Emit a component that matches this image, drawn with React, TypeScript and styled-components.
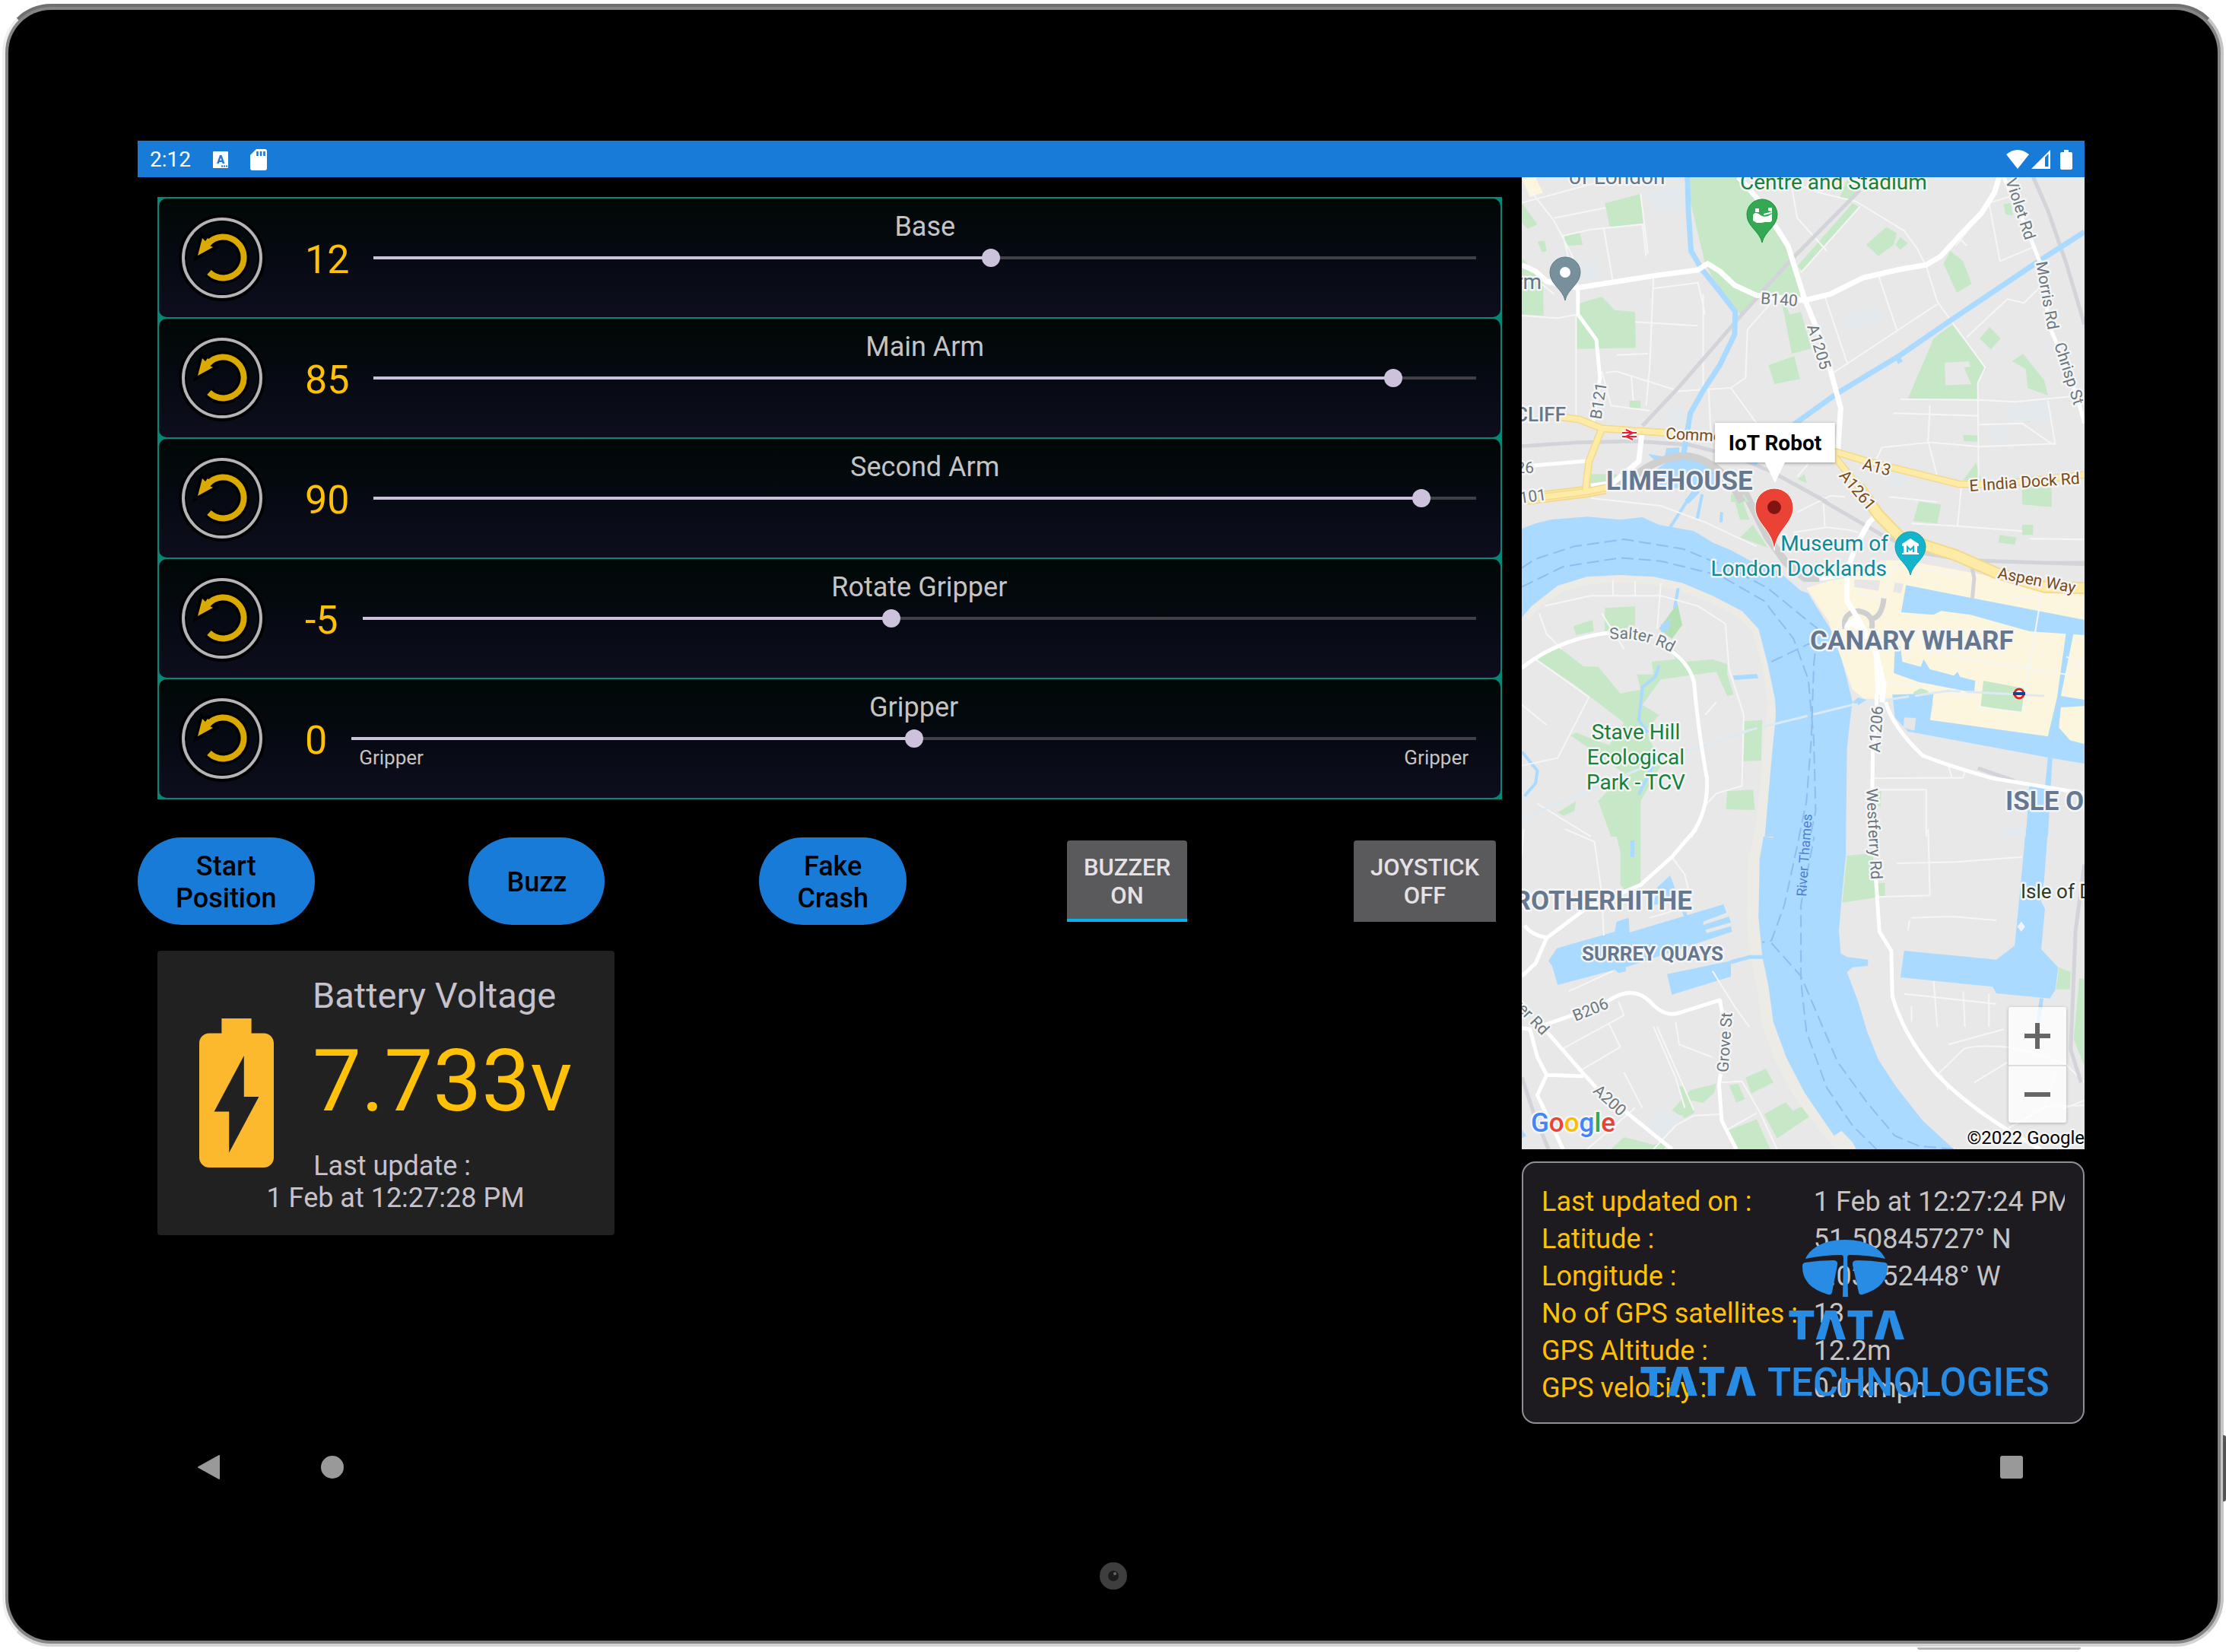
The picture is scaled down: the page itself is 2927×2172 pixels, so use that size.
import React, { useId, useState } from "react";
import styled, { createGlobalStyle } from "styled-components";

const GlobalStyle = createGlobalStyle`
  *, *::before, *::after { box-sizing: border-box; }
  body {
    margin: 0;
    background: #ffffff;
    font-family: Roboto, "Liberation Sans", sans-serif;
    color: #c6c1ca;
  }
  button, input { font: inherit; }
  button { cursor: pointer; }
`;

/* ---------- tablet shell ---------- */

const Page = styled.div`
  padding: 5px 3px 7px;
`;

const Shell = styled.div`
  position: relative;
  border: 4px solid;
  border-color: #6f706f #c6c6c6 #d4d4d4 #efefef;
  border-radius: 64px;
  background: #858585;
  padding: 4px;
`;

const PowerKey = styled.span`
  position: absolute;
  right: -7px;
  top: 1878px;
  width: 4px;
  height: 87px;
  border-radius: 0 3px 3px 0;
  background: #555555;
`;

const BottomKey = styled.span`
  position: absolute;
  right: 184px;
  bottom: -8px;
  width: 215px;
  height: 3px;
  border-radius: 0 0 4px 4px;
  background: #b4b4b4;
`;

const Glass = styled.div`
  border-radius: 56px;
  background: #000000;
`;

const Screen = styled.div`
  padding: 172px 175px 0 170px;
`;

const Chin = styled.div`
  display: flex;
  height: 171px;
  align-items: center;
  justify-content: center;
`;

/* ---------- status and navigation bars ---------- */

const StatusBar = styled.header`
  display: flex;
  align-items: center;
  justify-content: space-between;
  height: 48px;
  padding: 1px 16px 0;
  background: #187bd7;
  color: #ffffff;
`;

const StatusGroup = styled.div<{ $gap: number }>`
  display: flex;
  align-items: center;
  gap: ${(p) => p.$gap}px;
`;

const Clock = styled.time`
  font-size: 28px;
  line-height: 34px;
`;

const NavBar = styled.nav`
  display: flex;
  align-items: center;
  height: 114px;
  padding: 0 81px 0 79px;
`;

const NavButton = styled.button<{ $push?: boolean }>`
  display: flex;
  padding: 0;
  border: 0;
  background: none;
  margin-left: ${(p) => (p.$push ? "auto" : "0")};
  margin-right: ${(p) => (p.$push ? "0" : "132px")};
`;

/* ---------- page columns ---------- */

const Columns = styled.main`
  display: grid;
  grid-template-columns: minmax(0, 91fr) minmax(0, 37fr);
`;

const Controls = styled.div`
  padding: 26px 26px 0 0;
`;

const Side = styled.aside`
  display: flex;
  flex-direction: column;
  gap: 16px;
`;

/* ---------- joint sliders ---------- */

const JointList = styled.section`
  display: flex;
  flex-direction: column;
  gap: 2px;
  margin-left: 26px;
  padding: 2px;
  background: #068877;
`;

const JointRow = styled.div`
  display: flex;
  height: 156px;
  padding: 0 20px 0 26px;
  border-radius: 10px;
  background: linear-gradient(180deg, #000806 0%, #060a12 50%, #0e0e1e 100%);
`;

const ResetButton = styled.button`
  display: flex;
  align-self: center;
  padding: 0;
  border: 0;
  border-radius: 50%;
  background: none;
`;

const JointValue = styled.output`
  align-self: center;
  margin-left: 52px;
  padding-top: 5px;
  font-size: 52px;
  line-height: 60px;
  color: #ffc107;
`;

const JointTrack = styled.div`
  flex: 1;
  min-width: 0;
  margin-left: 20px;
  padding-top: 16px;
`;

const JointName = styled.label`
  display: block;
  font-size: 36px;
  line-height: 42px;
  text-align: center;
  color: #c4c4c4;
`;

const Range = styled.input`
  display: block;
  appearance: none;
  width: 100%;
  height: 20px;
  margin: 10px 0 0;
  background: none;

  &::-webkit-slider-runnable-track {
    height: 4px;
    background: linear-gradient(
      90deg,
      transparent 12px,
      #cdc2dc 12px,
      #cdc2dc var(--fill),
      #424047 var(--fill),
      #424047 calc(100% - 12px),
      transparent calc(100% - 12px)
    );
  }

  &::-webkit-slider-thumb {
    appearance: none;
    width: 24px;
    height: 24px;
    margin-top: -10px;
    border-radius: 50%;
    background: #cdc2dc;
  }
`;

const RangeEnds = styled.div`
  display: flex;
  justify-content: space-between;
  padding: 0 22px;
  font-size: 26px;
  line-height: 30px;
  color: #c4c4c4;
`;

/* ---------- command buttons ---------- */

const Commands = styled.section`
  display: flex;
  align-items: center;
  justify-content: space-between;
  margin-top: 50px;
`;

const Command = styled.button`
  min-height: 115px;
  padding: 17px 50px 14px;
  border: 0;
  border-radius: 58px;
  background: #187bd7;
  color: #000000;
  font-size: 36px;
  font-weight: 500;
  line-height: 42px;
  white-space: pre-line;
`;

const Toggle = styled.button`
  height: 107px;
  margin: 0 8px;
  padding: 0 22px;
  border: 0;
  border-radius: 4px 4px 0 0;
  background: #5a5a5c;
  color: #e6e1e5;
  font-size: 31px;
  font-weight: 500;
  line-height: 37px;
  white-space: pre-line;

  &[aria-pressed="true"] {
    box-shadow: inset 0 -4px 0 #03b4f0;
  }
`;

/* ---------- battery card ---------- */

const BatteryCard = styled.section`
  display: grid;
  grid-template-columns: 98px 1fr;
  column-gap: 51px;
  width: max-content;
  min-width: 601px;
  margin: 34px 0 0 26px;
  padding: 31px 54px 28px 55px;
  border-radius: 4px;
  background: #212121;
`;

const BatteryIcon = styled.svg`
  grid-area: 1 / 1 / 4 / 2;
  margin-top: 58px;
`;

const BatteryTitle = styled.h2`
  grid-area: 1 / 2;
  margin: 0;
  font-size: 47px;
  font-weight: 400;
  line-height: 56px;
`;

const BatteryVolts = styled.p`
  grid-area: 2 / 2;
  margin: 18px 0 0;
  font-size: 114px;
  line-height: 132px;
  color: #ffc107;
`;

const BatteryTime = styled.p`
  grid-area: 3 / 1 / 4 / 3;
  margin: 25px 0 0;
  padding-left: 24px;
  font-size: 36px;
  line-height: 42px;
  text-align: center;
  white-space: pre-line;
`;

/* ---------- map ---------- */

const MapFrame = styled.section`
  position: relative;
  overflow: hidden;
  aspect-ratio: 740 / 1278;
  background: #e8e8e8;
`;

const MapArt = styled.svg`
  display: block;
  width: 100%;
  height: 100%;

  .water { fill: #aadaff; }
  .park { fill: #c6e8c7; }
  .paved { fill: #fdf6de; }
  .campus { fill: #e3e9ed; }
  .tile path { vector-effect: non-scaling-stroke; stroke-linejoin: round; }
  .lines path { fill: none; }
  .minor { stroke: #f6f6f6; stroke-width: 2; }
  .road { stroke: #ffffff; stroke-width: 5; }
  .wide { stroke: #ffffff; stroke-width: 7; }
  .trunkEdge { stroke: #f3d98d; stroke-width: 10; }
  .trunk { stroke: #fdeba6; stroke-width: 7; }
  .rail { stroke: #d3d4d9; stroke-width: 5; }
  .tunnel { stroke: #cfcfcf; stroke-width: 10; }
  .canal { stroke: #aadaff; stroke-width: 7; }
  .bank { stroke: #ecebe6; stroke-width: 24; }
  .ferry { stroke: #8fbdf0; stroke-width: 2; stroke-dasharray: 16 7; }
  .tube { stroke: #dde9f3; stroke-width: 3; stroke-dasharray: 60 8; }

  text {
    paint-order: stroke;
    stroke: #f4f5f6;
    stroke-width: 5px;
    stroke-linejoin: round;
  }
  .street { font-size: 21px; fill: #6c777e; }
  .highway { font-size: 21px; fill: #7b4a12; }
  .district { font-size: 35px; font-weight: 700; fill: #66788f; }
  .quarter { font-size: 26px; font-weight: 700; fill: #66788f; }
  .green { font-size: 28px; fill: #188038; }
  .teal { font-size: 28px; fill: #0d8a96; }
  .plain { font-size: 28px; fill: #607787; }
  .river { font-size: 18px; fill: #4f7fd0; stroke: none; }
`;

const InfoWindow = styled.div`
  position: absolute;
  left: 45%;
  top: 323px;
  transform: translateX(-50%);
  padding: 10px 18px 8px;
  background: #ffffff;
  box-shadow: 0 1px 4px rgba(0, 0, 0, 0.35);
  color: #000000;
  font-size: 28px;
  font-weight: 700;
  line-height: 34px;
  white-space: nowrap;

  &::after {
    content: "";
    position: absolute;
    left: 50%;
    top: 100%;
    margin-left: -13px;
    border: 13px solid transparent;
    border-top: 27px solid #ffffff;
    border-bottom: 0;
  }
`;

const ZoomBox = styled.div`
  position: absolute;
  right: 24px;
  bottom: 35px;
  display: flex;
  flex-direction: column;
  width: 76px;
  border-radius: 3px;
  background: rgba(255, 255, 255, 0.76);
  box-shadow: 0 1px 4px rgba(0, 0, 0, 0.25);
`;

const ZoomButton = styled.button`
  display: flex;
  align-items: center;
  justify-content: center;
  height: 76px;
  padding: 0;
  border: 0;
  background: none;

  & + & { border-top: 2px solid #dddddd; }
`;

/* ---------- GPS panel ---------- */

const GpsPanel = styled.section`
  position: relative;
  padding: 27px 24px 20px;
  border: 2px solid #8f8e96;
  border-radius: 18px;
  background: #1d1b20;
`;

const GpsTable = styled.table`
  width: 100%;
  border-collapse: collapse;
  table-layout: fixed;
  font-size: 36px;
  line-height: 49px;

  th, td { padding: 0; text-align: left; font-weight: 400; white-space: nowrap; }
  th { width: 52%; color: #ffc107; }
  td { overflow: hidden; color: #c4c4c4; }
`;

const Brand = styled.svg`
  position: absolute;
  right: 38px;
  top: 101px;
  overflow: visible;

  text { fill: #288ce4; }
  .mark { font-family: Inter, "Noto Sans", sans-serif; font-size: 52px; font-weight: 900; }
  .name { font-family: Roboto, "Noto Sans", sans-serif; font-size: 51px; font-weight: 500; }
`;

/* ---------- data ---------- */

type Joint = { name: string; start: number; ends?: [string, string] };

const JOINTS: Joint[] = [
  { name: "Base", start: 12 },
  { name: "Main Arm", start: 85 },
  { name: "Second Arm", start: 90 },
  { name: "Rotate Gripper", start: -5 },
  { name: "Gripper", start: 0, ends: ["Gripper", "Gripper"] },
];

const GPS_ROWS: [string, string][] = [
  ["Last updated on :", "1 Feb at 12:27:24 PM"],
  ["Latitude :", "51.50845727° N"],
  ["Longitude :", "0.03352448° W"],
  ["No of GPS satellites :", "13"],
  ["GPS Altitude :", "12.2m"],
  ["GPS velocity :", "0.0 kmph"],
];

/* ---------- parts ---------- */

function ResetIcon() {
  const arc = "M38 39 A27 27 0 1 1 40 76";
  const head = "M31 31 L25 54 L45 43 L41 41 L45 37 L38 31 L35 35 Z";
  return (
    <svg width="114" height="114" viewBox="0 0 114 114" aria-hidden="true">
      <circle cx="57" cy="57" r="52" fill="none" stroke="#000000" strokeWidth="10" />
      <circle cx="57" cy="57" r="51" fill="none" stroke="#b4b3b8" strokeWidth="4" />
      <g fill="none" stroke="#000000">
        <path d={arc} strokeWidth="15" />
        <path d={head} strokeWidth="8" />
      </g>
      <path d={arc} fill="none" stroke="#daaa00" strokeWidth="8" />
      <path d={head} fill="#daaa00" />
    </svg>
  );
}

function JointControl({ joint }: { joint: Joint }) {
  const [value, setValue] = useState(joint.start);
  const id = useId();
  const share = (value + 100) / 200;
  const fill = { "--fill": `calc(12px + (100% - 24px) * ${share})` } as React.CSSProperties;
  return (
    <JointRow>
      <ResetButton type="button" aria-label={`Reset ${joint.name}`} onClick={() => setValue(0)}>
        <ResetIcon />
      </ResetButton>
      <JointValue htmlFor={id}>{value}</JointValue>
      <JointTrack>
        <JointName htmlFor={id}>{joint.name}</JointName>
        <Range
          id={id}
          type="range"
          min={-100}
          max={100}
          value={value}
          style={fill}
          onChange={(e) => setValue(Number(e.target.value))}
        />
        {joint.ends && (
          <RangeEnds>
            <span>{joint.ends[0]}</span>
            <span>{joint.ends[1]}</span>
          </RangeEnds>
        )}
      </JointTrack>
    </JointRow>
  );
}

function Pin({ x, y, fill, edge, children }: { x: number; y: number; fill: string; edge: string; children: React.ReactNode }) {
  return (
    <g transform={`translate(${x} ${y})`}>
      <path d="M0 37 C-3 22 -20 16 -20 0 A20 20 0 0 1 20 0 C20 16 3 22 0 37Z" fill={fill} stroke={edge} strokeWidth="1" />
      {children}
    </g>
  );
}

/* The district north of the river, from Mile End to the A13. */
function NorthTile() {
  return (
    <g className="tile" transform="translate(-11 -53) scale(0.4847 0.3333)">
      <path className="park" d="M478 158H605L655 240L700 350L745 430L785 620L735 650L750 700L780 690L808 835L755 855L735 700L725 640L680 620L620 705L560 610L520 500L478 240Z" />
      <path className="park" d="M692 900L762 865L777 955L708 975ZM248 262L345 225L355 340L262 357ZM23 260L65 345L38 362L23 340ZM133 390L180 378L188 425L145 430ZM170 660L240 630L275 683L330 690L332 832L170 836ZM23 480L80 560L82 705L23 700ZM905 170L940 210L905 250L885 240ZM920 262L937 275L785 530L770 510ZM65 412L85 410L90 450L78 455Z" />
      <path className="park" d="M957 425L1012 355L1040 380L1032 425L990 470ZM1050 395L1070 420L1050 445L1036 425ZM1185 450L1220 490L1243 580L1203 615L1167 500ZM1265 795L1292 750L1322 795L1295 838ZM1353 885L1382 855L1410 905L1440 960L1450 1020L1395 990L1390 915ZM1330 265L1350 260L1355 310L1335 305ZM1370 1095L1400 1085L1402 1125L1370 1125ZM1220 1175L1260 1178L1260 1203L1222 1200ZM1220 1355L1255 1285L1270 1355ZM205 1330L280 1330L290 1370L200 1385ZM315 1040H345V1070H315ZM1380 1385L1450 1375L1458 1440H1380ZM590 1410H625L640 1440H590ZM770 1350L790 1330L795 1365Z" />
      <path className="park" fillRule="evenodd" d="M1070 1033L1140 795L1190 740L1283 915L1260 965L1258 1035ZM1170 890L1235 885L1240 905L1222 910L1242 975L1172 980Z" />
      <path className="campus" d="M350 215L445 195L465 280L400 290ZM895 700L995 670L1005 730L900 770ZM1340 1060L1445 1040L1455 1115L1340 1130ZM1300 1140L1335 1135V1215L1300 1218ZM1020 1330L1060 1325L1055 1385L1020 1380ZM420 1070H460V1140H420ZM190 490H230L225 570H195Z" />
      <path className="paved" d="M23 165L60 160L80 220L45 237Z" />
      <path className="water" d="M380 1320L420 1280L470 1268L540 1285L575 1340L560 1380L400 1388ZM365 1250L410 1262L415 1228L450 1225V1252L380 1272Z" />
      <g className="lines">
        <path className="minor" d="M40 200L110 330L160 470L175 595M23 260L240 175L380 160M110 320L250 280M150 480L135 390L210 365L350 345L360 470M345 225L365 460M245 360L270 570M23 705L120 715L175 700M170 700V1100M60 560L110 620M380 550L370 900L360 1060M250 930L280 925L450 1003L590 990L630 950L635 760L720 620M515 620V990M500 570L520 700M280 860L365 855M240 925L265 1060L370 1080M320 940L325 1040M590 990L660 1130M530 1000L535 1160M380 598L500 575M330 730L500 745" />
        <path className="minor" d="M720 160L830 220L930 255L1060 370L1095 440L1120 510L1150 650L1185 720L1280 910L1260 970L1262 1370M1150 660L1040 765L905 895L862 935M845 630L905 890M990 545L1040 760M940 275L780 535M1200 430L1290 260L1360 230M1210 400L1230 430M1290 260L1320 490L1410 435M1230 790L1340 640L1385 655L1430 590M1050 1035L1260 1037L1360 1045L1540 1020M1030 1090L1260 1100M1265 1135L1380 1130L1465 1215M1000 1225L1130 1205L1265 1222L1470 1210M1130 1060L1125 1200L1150 1340M1450 1040L1470 1215M985 1270L1000 1225M770 1340L800 1290M750 160L770 320L850 450" />
        <path className="rail" d="M940 210L750 490L620 700L450 985L350 1140M1410 158L1450 290L1500 500L1549 740M23 1220L180 1205L330 1200L480 1215L600 1260L700 1320L850 1440" />
        <path className="tunnel" d="M210 1385L320 1350Q380 1270 460 1258Q560 1265 620 1440" />
        <path className="canal" d="M472 158L475 300L482 450L510 520L560 610L602 690L600 780L560 900L515 1000L480 1090L462 1250M1549 375L1420 495L1185 725L1045 865L880 1010L765 1130L650 1290M1040 865L1050 890M500 1395L470 1440" />
        <path className="wide" d="M23 505L60 530L90 570L175 595L380 548L500 525L527 500L560 530L600 585L660 625L790 645L860 620L950 555L1050 522L1120 505L1160 470L1210 390L1270 300L1305 220L1318 158" />
        <path className="wide" d="M610 158L660 240L710 350L745 430L790 640L830 780L860 920L888 1070L880 1240M350 1150L340 1280L270 1365L210 1378" />
        <path className="road" d="M175 595V700L225 800L235 950L215 1130M1330 158L1400 390L1430 500L1455 750L1490 870L1530 1030L1549 1130M50 1297L200 1278" />
        <path className="trunkEdge" d="M130 1105L180 1115L240 1150L420 1168L700 1190L880 1245L960 1280L1210 1370L1300 1372L1549 1333M865 1250L970 1440M240 1150L205 1280L195 1400M23 1430L195 1400L270 1378" />
        <path className="trunk" d="M130 1105L180 1115L240 1150L420 1168L700 1190L880 1245L960 1280L1210 1370L1300 1372L1549 1333M865 1250L970 1440M240 1150L205 1280L195 1400M23 1430L195 1400L270 1378" />
      </g>
    </g>
  );
}

/* The bend of the Thames, Canary Wharf and its docks. */
function CentreTile() {
  return (
    <g className="tile" transform="translate(-11 407) scale(0.4847 0.3333)">
      <path className="park" d="M248 478L330 472V548L248 575ZM163 550L215 525L218 570L170 585ZM60 680L125 635L190 708L230 710L290 815L345 800L335 740L380 740L375 690L440 680L420 620L470 690L540 680L580 700L580 740L597 820L580 825L550 730L400 760L350 860L395 900L360 960L400 1100L345 1240V1380H265L230 1240L300 1130L155 980L170 970L260 1020L300 930L160 775ZM625 925L675 920L672 1080L623 1082ZM580 1200L650 1195L655 1275L577 1272ZM120 1285L170 1240L165 1280L135 1298ZM440 1040L475 1035L450 1050Z" />
      <path className="park" d="M1100 58L1160 70L1150 145L1085 135ZM1385 0L1460 0V80L1380 70ZM1380 150H1410V190H1380ZM1320 190L1365 200L1360 228L1315 220ZM595 30L610 0L640 130H615ZM615 200L650 150L690 240ZM985 1200L998 1200L996 1262L985 1255Z" />
      <path className="campus" d="M1330 1360L1390 1330V1380H1330Z" />
      <path className="paved" d="M795 400L860 370L900 360L1000 290L1060 290L1210 330L1549 420V1020L1450 985L1130 920L1140 850L950 835L920 800L890 680L855 530Z" />
      <path d="M925 365L995 370L990 410L925 395ZM1035 378L1058 382L1052 420L1030 415Z" fill="#e6e6e6" />
      <path className="park" d="M1275 765L1385 795L1380 890L1268 865ZM1085 810L1105 795L1125 805V835L1088 828Z" />
      <g className="lines">
        <path className="bank" d="M23 500L60 440L130 375L200 350L290 340L380 350L460 375L540 420L620 480L670 550L700 700L715 860L705 1000L690 1240L680 1380" />
      </g>
      <path className="water" d="M23 165L60 145L100 130L200 118L290 130L350 120L395 150L490 175L540 220L590 250L640 290L700 310L740 360L780 410L800 420L825 480L860 560L890 680L905 760L920 850L915 900L905 1030L902 1380H682L700 1080L712 900L710 840L690 700L665 560L620 490L540 430L460 380L380 355L290 348L200 355L120 390L50 470L23 515Z" />
      <path className="water" d="M1065 388L1549 525V585L1400 570L1240 505L1160 490L1140 505L1052 495ZM1035 625L1050 630L1055 690L1105 710L1113 680L1130 720L1195 745L1205 730L1212 750L1253 765L1250 812L1100 770L1032 735ZM1028 820L1140 815L1130 920L1450 985L1475 830L1500 568L1520 575L1485 825L1549 840V865L1485 870L1480 950L1510 1000L1549 1015V1092L1460 1070L1070 965L1035 910ZM1450 1068L1462 1072L1450 1380H1390L1400 1180L1442 1185ZM595 745L660 738L665 755L600 762ZM920 850L935 832L958 840L935 862Z" />
      <path d="M1060 910L1092 912L1088 962L1058 950Z" fill="#e6e6e6" />
      <path d="M430 490L445 460L458 545L430 600L395 560Z" fill="#b5e0b3" />
      <path className="water" d="M400 545L428 518L420 570L400 572Z" />
      <g className="lines">
        <path className="canal" d="M492 10L425 160M512 30L498 130M565 100L563 140M447 400L437 480M395 705L385 750L350 790L345 860L340 920L365 970M340 1215L385 1080M23 1045L65 1120L60 1170L30 1220" style={{ strokeWidth: 4 }} />
        <path className="minor" d="M210 45L400 75L520 140L660 235M770 100L860 35L900 40M760 180L850 160L910 170L935 180M840 40L845 155M1020 40L1150 60M1215 0L1205 155L1380 175M1205 155L1080 145M1400 205L1549 208M85 470L210 430L400 430L500 470L575 540L585 720L625 900L620 1180L550 1210L525 1250M60 680L205 830L120 1070L23 1100M300 640L240 500M65 1250L210 1380M270 370V430M330 370V430M400 380L390 560M23 860L90 940M550 850L520 900M70 500L90 580L130 640M980 1150L1220 1148L1225 1120M980 1195H1120V1380M1180 1100L1190 1150M930 420L1005 440L1030 320L1060 310L1210 350M1435 400L1380 890L1265 870L1260 830L1000 765M1100 640L1280 690L1520 745L1540 700L1500 670M1350 440L1430 430M1100 560V640M1000 600L1100 570" />
        <path className="rail" d="M840 55L1000 190L1100 260L1240 290L1549 305M1430 300H1549M1240 290L1250 360L1245 440M1260 1110L1360 1160" />
        <path className="tunnel" d="M620 0L690 200L740 300L790 360L830 360" />
        <path className="tunnel" d="M900 560Q890 500 935 490Q980 500 972 560M975 520Q1000 510 1005 440" style={{ strokeWidth: 7 }} />
        <path className="tube" d="M23 1310L380 1090L640 960L920 860L1180 805L1440 825" />
        <path className="wide" d="M985 110L965 140L930 230L905 330V450L935 520L985 660L1005 780L1000 850M905 560Q905 530 935 525M920 540Q960 580 985 660L990 820M830 360L900 345" />
        <path className="road" d="M23 715Q120 600 262 575M420 640Q475 690 490 770Q500 950 525 1150Q530 1280 480 1380M1010 850Q1030 950 1110 1060Q1180 1100 1300 1150L1549 1210M985 820V900L975 1050L972 1380" />
        <path className="trunkEdge" d="M937 0L990 110L1050 200L1200 270L1310 340L1440 395L1549 400M23 50L195 20L250 5" style={{ strokeWidth: 16 }} />
        <path className="trunk" d="M937 0L990 110L1050 200L1200 270L1310 340L1440 395L1549 400M23 50L195 20L250 5" style={{ strokeWidth: 12 }} />
        <path className="ferry" d="M23 320L60 285L165 235L300 207L460 245L600 330L690 400L825 560L815 700L808 1000L795 1240L775 1380M23 395L135 315L290 280L400 293L560 350L680 450L760 600L800 760L815 1000L820 1280L805 1380M700 690L830 600" />
      </g>
    </g>
  );
}

/* Rotherhithe, Surrey Quays and the Isle of Dogs. */
function SouthTile() {
  return (
    <g className="tile" transform="translate(-11 857) scale(0.4847 0.3333)">
      <path className="park" d="M275 0H345L345 230L310 250L290 220V90ZM905 105L975 95L985 270L892 290ZM990 212H1008V265H990ZM1480 545L1512 565L1510 632H1472ZM1535 590H1549V935L1520 830ZM630 980L685 945L705 1000L645 1043ZM680 1125L738 1078L758 1110L810 1078L818 1120L715 1220ZM580 1190L660 1145L697 1263H600ZM585 1010L610 1005L628 1065L605 1080ZM430 1110L480 1030L550 1005L545 1040L515 1080L480 1070L490 1120L465 1140ZM445 1015H462L492 1115L475 1130ZM265 1263L300 1215L380 1245L415 1230L410 1263Z" />
      <path className="campus" d="M370 1160L390 1110L460 1130L430 1190L400 1220ZM1325 0H1390V30L1330 20Z" />
      <g className="lines">
        <path className="bank" d="M682 0L662 120L658 350L668 500L685 620L698 760L733 900L783 1040L880 1220L925 1263" />
      </g>
      <path className="water" d="M682 0L668 120L665 350L675 500L692 620L705 760L740 900L790 1040L870 1210L890 1190L920 1235L930 1263H1195L1110 1150L1040 1020L990 910L960 800L935 680L905 565L920 545L962 540V515L905 505L888 490L883 400L890 280L902 100V0Z" />
      <path className="water" d="M118 470L275 405L280 365L313 350L315 408L570 297L578 330L515 365V378L585 345L590 368L520 398L525 410L590 383L593 405L480 460L305 545V562L285 568L275 555L120 615L105 540L95 520ZM417 572L590 520V582L430 653ZM390 230L425 183L440 240L420 290L380 300ZM1390 0H1450L1440 200L1430 280L1442 315L1432 475L1478 545L1470 635L1455 668L1310 648L1300 622L1050 585L1060 480L1310 515L1360 460L1370 310L1378 190ZM23 1185L35 1210L23 1220Z" />
      <path d="M1378 365L1388 385L1378 405L1367 385Z" fill="#f3f3f3" />
      <g className="lines">
        <path className="canal" d="M590 525L640 505L680 505M1433 668L1420 800M323 45V110M462 320L468 345" style={{ strokeWidth: 5 }} />
        <path className="minor" d="M23 100L28 0M140 0L220 50L240 260L245 420M430 110L465 180L480 270M370 350L440 320L460 320M260 770L290 860L185 950M130 870L300 735L285 680M380 780L440 980L465 1100M390 780L490 1110M440 760L450 850L540 900M565 1000L620 995L670 1120L715 1263M660 1120L575 1190M560 1125L490 1130L440 1170L380 1263M300 960L350 1100M200 1263L330 1100M540 560L600 700L640 780M150 640L270 560M1040 135L1200 130L1380 110M990 268L1130 262L1125 0M1080 350L1190 345L1310 360M1070 400L1075 360M1060 650L1310 690M1080 700V760M1140 600L1150 780M1220 640L1225 780M1290 650L1290 780M1180 850L1330 790M1150 970L1220 870Q1240 850 1340 860Q1440 890 1500 930L1549 1000M1160 970L1180 1030M1330 1190L1440 1100L1470 960M1440 1095L1549 1090M1480 1110L1549 1070M1250 1000L1340 920" />
        <path className="rail" d="M1549 140L1525 400L1512 870L1540 1000M23 980L55 1120L95 1263" />
        <path className="road" d="M495 0L430 110L345 220L200 310L90 430L60 530L23 580M30 380Q50 420 90 428M80 775L160 735M250 685Q320 610 370 680Q410 745 450 725L560 675L568 735M562 965L558 1010L565 1150L605 1263M85 790L190 965L225 1020M300 1110L430 1263M23 785L45 790L65 900L90 970L190 975M90 970L65 1050L135 1263" />
        <path className="road" d="M983 190L993 405L1025 480L1028 660Q1060 820 1150 970Q1250 1120 1430 1263" />
        <path className="ferry" d="M780 0L735 300L700 440L675 447M700 450L780 580L830 750L880 920L960 1080L1035 1210L1100 1250L1195 1263M820 0L780 300V600L795 800L850 1020L920 1170L985 1263" />
      </g>
    </g>
  );
}

function MapLabels() {
  return (
    <g>
      <text className="plain" x="62" y="9">of London</text>
      <text className="green" x="287" y="16">Centre and Stadium</text>
      <text className="plain" x="26" y="147" textAnchor="end">arm</text>
      <text className="street" textAnchor="middle" transform="translate(338 168) rotate(4)">B140</text>
      <text className="street" textAnchor="middle" transform="translate(384 225) rotate(73)">A1205</text>
      <text className="street" textAnchor="middle" transform="translate(108 295) rotate(-81)">B121</text>
      <text className="quarter" x="58" y="321" textAnchor="end" style={{ fontWeight: 500 }}>RATCLIFF</text>
      <text className="highway" transform="translate(189 344) rotate(3)">Commercial</text>
      <text className="highway" textAnchor="middle" transform="translate(465 388) rotate(14)">A13</text>
      <text className="highway" transform="translate(589 413) rotate(-4)">E India Dock Rd</text>
      <text className="highway" textAnchor="middle" transform="translate(436 416) rotate(50)">A1261</text>
      <text className="street" textAnchor="end" transform="translate(33 424) rotate(-8)">A101</text>
      <text className="street" x="16" y="389" textAnchor="end">B126</text>
      <text className="street" transform="translate(636 4) rotate(72)">Violet Rd</text>
      <text className="street" transform="translate(676 112) rotate(80)">Morris Rd</text>
      <text className="street" transform="translate(700 220) rotate(72)">Chrisp St</text>
      <text className="district" x="111" y="411">LIMEHOUSE</text>
      <text className="teal" x="482" y="491" textAnchor="end">Museum of</text>
      <text className="teal" x="480" y="524" textAnchor="end">London Docklands</text>
      <text className="highway" transform="translate(625 527) rotate(11)">Aspen Way</text>
      <text className="district" x="379" y="621">CANARY WHARF</text>
      <path id="salter" d="M116 608Q160 602 202 628" fill="none" />
      <text className="street"><textPath href="#salter">Salter Rd</textPath></text>
      <g textAnchor="middle">
        <text className="green" x="150" y="739">Stave Hill</text>
        <text className="green" x="150" y="772">Ecological</text>
        <text className="green" x="150" y="805">Park - TCV</text>
      </g>
      <text className="street" textAnchor="middle" transform="translate(473 726) rotate(-86)">A1206</text>
      <text className="street" transform="translate(453 804) rotate(87)">Westferry Rd</text>
      <text className="river" transform="translate(374 946) rotate(-86)">River Thames</text>
      <text className="district" x="636" y="832">ISLE OF DOGS</text>
      <text className="district" x="224" y="963" textAnchor="end">ROTHERHITHE</text>
      <text className="quarter" x="79" y="1030">SURREY QUAYS</text>
      <text x="656" y="948" fontSize="26" fill="#2f3a1e">Isle of Dogs</text>
      <text className="street" textAnchor="middle" transform="translate(93 1101) rotate(-22)">B206</text>
      <text className="street" textAnchor="end" transform="translate(27 1129) rotate(46)">Lower Rd</text>
      <text className="street" textAnchor="middle" transform="translate(274 1138) rotate(-86)">Grove St</text>
      <text className="street" textAnchor="middle" transform="translate(111 1219) rotate(42)">A200</text>
      <text x="12" y="1255" fontSize="35" fontWeight="500">
        <tspan fill="#4285f4">G</tspan>
        <tspan fill="#ea4335">o</tspan>
        <tspan fill="#fbbc04">o</tspan>
        <tspan fill="#4285f4">g</tspan>
        <tspan fill="#34a853">l</tspan>
        <tspan fill="#ea4335">e</tspan>
      </text>
      <text x="740" y="1271" fontSize="24" fill="#000000" textAnchor="end">©2022 Google</text>
    </g>
  );
}

function RobotMap() {
  return (
    <MapFrame aria-label="Robot location">
      <MapArt viewBox="0 0 740 1278" preserveAspectRatio="xMidYMid slice">
        <SouthTile />
        <CentreTile />
        <NorthTile />
        <MapLabels />
        <Pin x={316} y={49} fill="#34a853" edge="#1e8e3e">
          <path d="M-12 2C-12 -3 -6 -3 -2 1C3 4 8 3 13 -1V8L11 10H4L-1 11H-7L-12 8Z" fill="#ffffff" />
          <path d="M-9 -8H-4V-3H-9ZM8 -9H13V-4L8 -5Z" fill="#ffffff" />
          <path d="M2 0Q8 -1 13 -3" fill="none" stroke="#ffffff" strokeWidth="2" />
        </Pin>
        <Pin x={57} y={125} fill="#78909c" edge="#607d8b">
          <circle r="7" fill="#ffffff" />
        </Pin>
        <Pin x={511} y={486} fill="#12b5cb" edge="#129eaf">
          <path d="M-11 -4L0 -11L11 -4V-1H9V8H11V10H-11V8H-9V-1H-11Z" fill="#ffffff" />
          <path d="M-4 7V0L0 4L4 0V7" fill="none" stroke="#12b5cb" strokeWidth="2" />
        </Pin>
        <path d="M332 491C329 462 307 456 307 434A25 25 0 0 1 357 434C357 456 335 462 332 491Z" fill="#ea4335" stroke="#ffffff" strokeWidth="1" />
        <circle cx="332" cy="434" r="9" fill="#811411" />
        <path d="M132 336H151M132 341H151M137 332L146 336L137 341L146 345" fill="none" stroke="#ffffff" strokeWidth="6" />
        <path d="M132 336H151M132 341H151M137 332L146 336L137 341L146 345" fill="none" stroke="#ee1c2e" strokeWidth="2" />
        <circle cx="654" cy="679" r="6" fill="#ffffff" stroke="#dc241f" strokeWidth="3" />
        <path d="M646 679H662" stroke="#1c3f94" strokeWidth="4" />
      </MapArt>
      <InfoWindow>IoT Robot</InfoWindow>
      <ZoomBox>
        <ZoomButton type="button" aria-label="Zoom in">
          <svg width="34" height="34" viewBox="0 0 34 34"><path d="M17 0V34M0 17H34" stroke="#666666" strokeWidth="6" /></svg>
        </ZoomButton>
        <ZoomButton type="button" aria-label="Zoom out">
          <svg width="34" height="34" viewBox="0 0 34 34"><path d="M0 17H34" stroke="#666666" strokeWidth="6" /></svg>
        </ZoomButton>
      </ZoomBox>
    </MapFrame>
  );
}

function BrandLogo() {
  return (
    <Brand width="545" height="212" viewBox="0 0 545 212" role="img" aria-label="TATA TECHNOLOGIES">
      <g fill="#288ce4">
        <path d="M218 25C224 12 240 0 270 0C300 0 317 12 323 25Q300 20 276 20Q273 20 273 24L274 75H267L268 24Q268 20 265 20Q242 20 218 25Z" />
        <path d="M214 34Q214 31 217 30Q236 27 255 27Q261 27 260 33L253 69Q252 73 248 72Q213 62 214 34Z" />
        <path d="M326 34Q326 31 323 30Q304 27 286 27Q279 27 280 33L288 69Q289 73 293 72Q327 62 326 34Z" />
      </g>
      <text className="mark" x="195" y="131">TΛTΛ</text>
      <text className="mark" x="0" y="205">TΛTΛ</text>
      <text className="name" x="168" y="205">TECHNOLOGIES</text>
    </Brand>
  );
}

function ToggleButton({ name, on }: { name: string; on: boolean }) {
  const [pressed, setPressed] = useState(on);
  return (
    <Toggle type="button" aria-pressed={pressed} onClick={() => setPressed(!pressed)}>
      {`${name}\n${pressed ? "ON" : "OFF"}`}
    </Toggle>
  );
}

export default function App() {
  return (
    <Page>
      <GlobalStyle />
      <Shell>
        <PowerKey />
        <BottomKey />
        <Glass>
          <Screen>
            <StatusBar>
              <StatusGroup $gap={29}>
                <Clock>2:12</Clock>
                <svg width="20" height="22" viewBox="0 0 20 22" aria-hidden="true">
                  <rect width="20" height="22" rx="1" fill="#ffffff" />
                  <text x="10" y="16" fontSize="15" fontWeight="900" textAnchor="middle" fill="#187bd7">A</text>
                  <path d="M11 19.500H19" stroke="#187bd7" strokeWidth="2" strokeDasharray="2 1" />
                </svg>
                <svg width="22" height="28" viewBox="0 0 22 28" aria-hidden="true">
                  <path d="M8 0H19Q22 0 22 3V25Q22 28 19 28H3Q0 28 0 25V8Z" fill="#ffffff" />
                  <path d="M9.500 3V9M14 3V9M18.500 3V9" stroke="#187bd7" strokeWidth="2.600" />
                </svg>
              </StatusGroup>
              <StatusGroup $gap={3}>
                <svg width="30" height="25" viewBox="0 0 30 25" aria-hidden="true">
                  <path d="M0 6Q15 -6 30 6L15 25Z" fill="#ffffff" />
                </svg>
                <svg width="25" height="25" viewBox="0 0 25 25" aria-hidden="true">
                  <path fillRule="evenodd" d="M25 0V25H0ZM18 10V22H22.500V5Z" fill="#ffffff" />
                </svg>
                <svg width="26" height="26" viewBox="0 0 26 26" aria-hidden="true">
                  <path d="M15 0H21V3H24Q26 3 26 5V24Q26 26 24 26H12Q10 26 10 24V5Q10 3 12 3H15Z" fill="#ffffff" />
                </svg>
              </StatusGroup>
            </StatusBar>
            <Columns>
              <Controls>
                <JointList aria-label="Joints">
                  {JOINTS.map((joint) => (
                    <JointControl key={joint.name} joint={joint} />
                  ))}
                </JointList>
                <Commands aria-label="Commands">
                  <Command type="button">{"Start\nPosition"}</Command>
                  <Command type="button">Buzz</Command>
                  <Command type="button">{"Fake\nCrash"}</Command>
                  <ToggleButton name="BUZZER" on />
                  <ToggleButton name="JOYSTICK" on={false} />
                </Commands>
                <BatteryCard>
                  <BatteryIcon width="98" height="196" viewBox="7 2 10 20" aria-hidden="true">
                    <path
                      d="M15.670 4H14V2h-4v2H8.330C7.600 4 7 4.600 7 5.330v15.330C7 21.400 7.600 22 8.330 22h7.330c.74 0 1.340-.6 1.340-1.330V5.330C17 4.600 16.400 4 15.670 4zM11 20v-5.500H9L13 7v5.500h2L11 20z"
                      fill="#fdb92e"
                    />
                  </BatteryIcon>
                  <BatteryTitle>Battery Voltage</BatteryTitle>
                  <BatteryVolts>7.733v</BatteryVolts>
                  <BatteryTime>{"Last update :\u00a0\n1 Feb at 12:27:28 PM"}</BatteryTime>
                </BatteryCard>
              </Controls>
              <Side>
                <RobotMap />
                <GpsPanel aria-label="GPS">
                  <GpsTable>
                    <tbody>
                      {GPS_ROWS.map(([name, value]) => (
                        <tr key={name}>
                          <th scope="row">{name}</th>
                          <td>{value}</td>
                        </tr>
                      ))}
                    </tbody>
                  </GpsTable>
                  <BrandLogo />
                </GpsPanel>
              </Side>
            </Columns>
            <NavBar aria-label="System">
              <NavButton type="button" aria-label="Back">
                <svg width="30" height="32" viewBox="0 0 30 32"><path d="M28 1V31L1 16Z" fill="#999999" stroke="#999999" strokeWidth="2" strokeLinejoin="round" /></svg>
              </NavButton>
              <NavButton type="button" aria-label="Home">
                <svg width="30" height="30" viewBox="0 0 30 30"><circle cx="15" cy="15" r="15" fill="#999999" /></svg>
              </NavButton>
              <NavButton type="button" aria-label="Recent apps" $push>
                <svg width="30" height="30" viewBox="0 0 30 30"><rect width="30" height="30" rx="3" fill="#999999" /></svg>
              </NavButton>
            </NavBar>
          </Screen>
          <Chin>
            <svg width="38" height="38" viewBox="0 0 38 38" aria-hidden="true">
              <circle cx="19" cy="19" r="18" fill="#3e3e3e" />
              <circle cx="19" cy="19" r="7" fill="#1c1c1c" />
              <circle cx="21" cy="16" r="2" fill="#666666" />
            </svg>
          </Chin>
        </Glass>
      </Shell>
    </Page>
  );
}
